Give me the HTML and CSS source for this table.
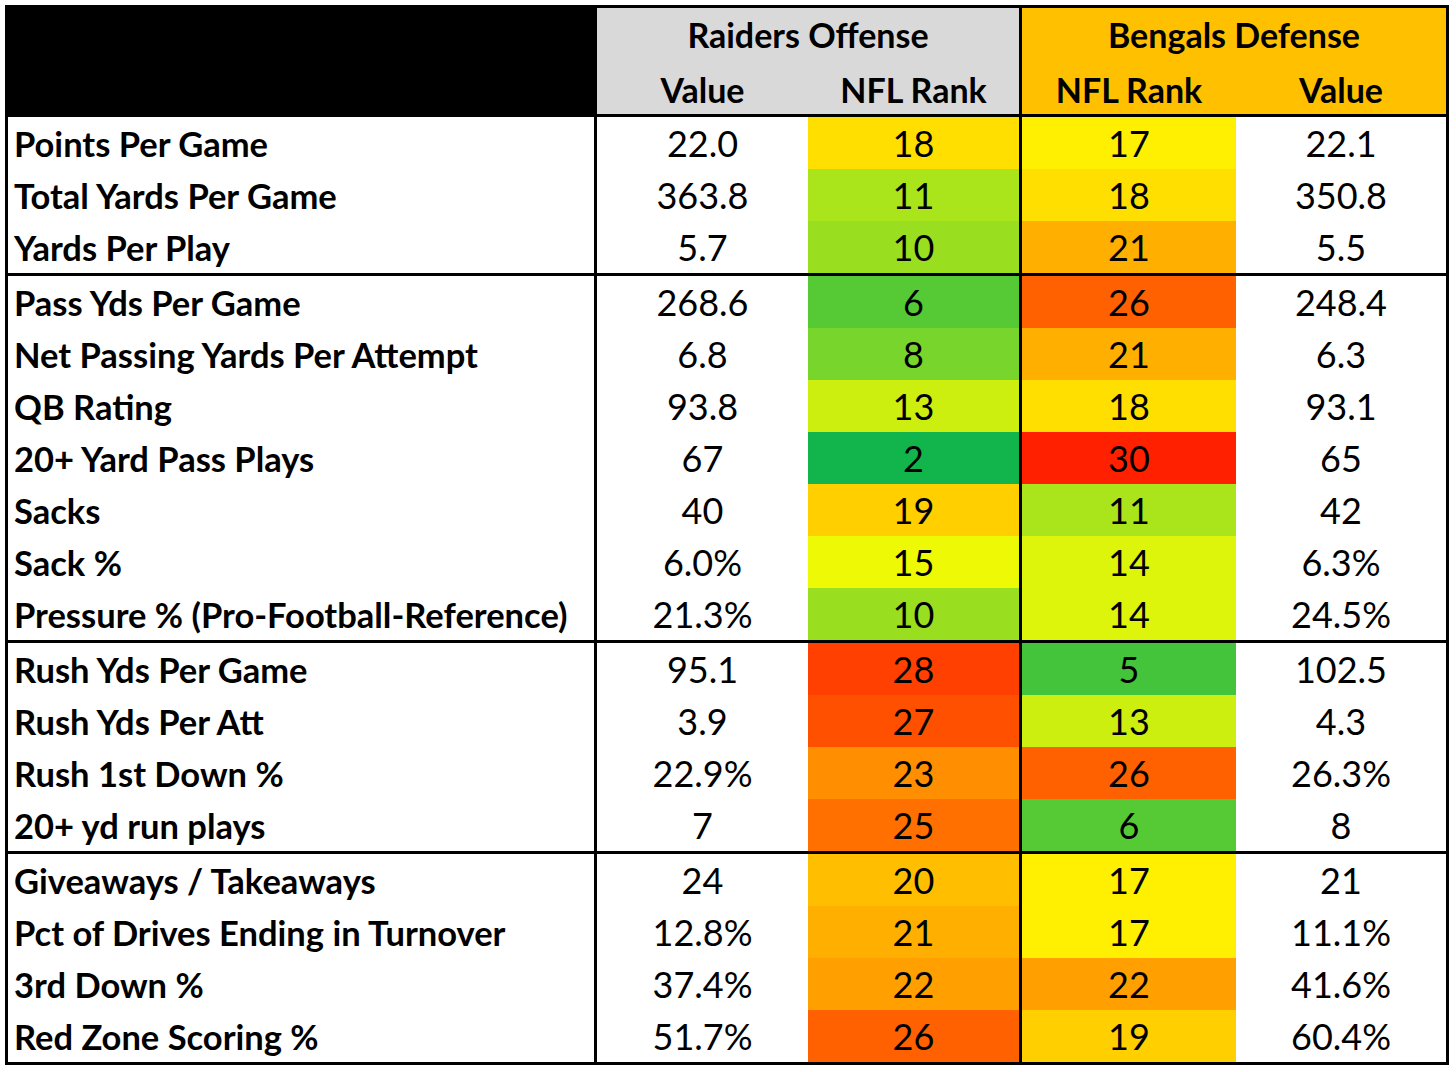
FILE: index.html
```html
<!DOCTYPE html>
<html lang="en">
<head>
<meta charset="utf-8">
<title>Raiders Offense vs Bengals Defense</title>
<link rel="stylesheet" href="styles.css">
</head>
<body>
<div class="page">
  <div class="sheet">
    <div class="head">
      <div class="hd-blank"></div>
      <div class="hd-team raiders">Raiders Offense</div>
      <div class="hd-team bengals">Bengals Defense</div>
      <div class="hd-sub raiders">Value</div>
      <div class="hd-sub raiders sep">NFL Rank</div>
      <div class="hd-sub bengals">NFL Rank</div>
      <div class="hd-sub bengals">Value</div>
    </div>

    <div class="section">
      <div class="row"><div class="lbl">Points Per Game</div><div class="val">22.0</div><div class="rank sep rk18">18</div><div class="rank rk17">17</div><div class="val">22.1</div></div>
      <div class="row"><div class="lbl">Total Yards Per Game</div><div class="val">363.8</div><div class="rank sep rk11">11</div><div class="rank rk18">18</div><div class="val">350.8</div></div>
      <div class="row"><div class="lbl">Yards Per Play</div><div class="val">5.7</div><div class="rank sep rk10">10</div><div class="rank rk21">21</div><div class="val">5.5</div></div>
    </div>

    <div class="section">
      <div class="row"><div class="lbl">Pass Yds Per Game</div><div class="val">268.6</div><div class="rank sep rk6">6</div><div class="rank rk26">26</div><div class="val">248.4</div></div>
      <div class="row"><div class="lbl">Net Passing Yards Per Attempt</div><div class="val">6.8</div><div class="rank sep rk8">8</div><div class="rank rk21">21</div><div class="val">6.3</div></div>
      <div class="row"><div class="lbl">QB Rating</div><div class="val">93.8</div><div class="rank sep rk13">13</div><div class="rank rk18">18</div><div class="val">93.1</div></div>
      <div class="row"><div class="lbl">20+ Yard Pass Plays</div><div class="val">67</div><div class="rank sep rk2">2</div><div class="rank rk30">30</div><div class="val">65</div></div>
      <div class="row"><div class="lbl">Sacks</div><div class="val">40</div><div class="rank sep rk19">19</div><div class="rank rk11">11</div><div class="val">42</div></div>
      <div class="row"><div class="lbl">Sack %</div><div class="val">6.0%</div><div class="rank sep rk15">15</div><div class="rank rk14">14</div><div class="val">6.3%</div></div>
      <div class="row"><div class="lbl">Pressure % (Pro-Football-Reference)</div><div class="val">21.3%</div><div class="rank sep rk10">10</div><div class="rank rk14">14</div><div class="val">24.5%</div></div>
    </div>

    <div class="section">
      <div class="row"><div class="lbl">Rush Yds Per Game</div><div class="val">95.1</div><div class="rank sep rk28">28</div><div class="rank rk5">5</div><div class="val">102.5</div></div>
      <div class="row"><div class="lbl">Rush Yds Per Att</div><div class="val">3.9</div><div class="rank sep rk27">27</div><div class="rank rk13">13</div><div class="val">4.3</div></div>
      <div class="row"><div class="lbl">Rush 1st Down %</div><div class="val">22.9%</div><div class="rank sep rk23">23</div><div class="rank rk26">26</div><div class="val">26.3%</div></div>
      <div class="row"><div class="lbl">20+ yd run plays</div><div class="val">7</div><div class="rank sep rk25">25</div><div class="rank rk6">6</div><div class="val">8</div></div>
    </div>

    <div class="section">
      <div class="row"><div class="lbl">Giveaways / Takeaways</div><div class="val">24</div><div class="rank sep rk20">20</div><div class="rank rk17">17</div><div class="val">21</div></div>
      <div class="row"><div class="lbl">Pct of Drives Ending in Turnover</div><div class="val">12.8%</div><div class="rank sep rk21">21</div><div class="rank rk17">17</div><div class="val">11.1%</div></div>
      <div class="row"><div class="lbl">3rd Down %</div><div class="val">37.4%</div><div class="rank sep rk22">22</div><div class="rank rk22">22</div><div class="val">41.6%</div></div>
      <div class="row"><div class="lbl">Red Zone Scoring %</div><div class="val">51.7%</div><div class="rank sep rk26">26</div><div class="rank rk19">19</div><div class="val">60.4%</div></div>
    </div>
  </div>
</div>
</body>
</html>
```

FILE: styles.css
```css
* { box-sizing: border-box; }

html, body {
  margin: 0;
  padding: 0;
  background: #ffffff;
}

.page {
  padding: 5px;
}

.sheet {
  width: max-content;
  border: 3px solid #000;
  font-family: Lato, "Liberation Sans", sans-serif;
  color: #000;
}

.head,
.row {
  display: grid;
  grid-template-columns: 589px 211px 214px 214px 210px;
}

.head {
  grid-template-rows: 52px 54px;
}

.hd-blank {
  grid-row: 1 / span 2;
  background: #000;
}

.hd-team,
.hd-sub {
  display: flex;
  align-items: center;
  justify-content: center;
  font-weight: 700;
  font-size: 34px;
}

.hd-sub {
  padding-top: 4px;
}

.hd-team {
  grid-column: span 2;
}

.hd-team.raiders {
  border-right: 3px solid #000;
}

.raiders { background: #d9d9d9; }
.bengals { background: #ffc000; }

.section {
  border-top: 3px solid #000;
}

.row {
  height: 52px;
}

.row > div {
  display: flex;
  align-items: center;
  justify-content: center;
  font-size: 36px;
}

.row > .lbl {
  justify-content: flex-start;
  padding-left: 6px;
  font-weight: 700;
  font-size: 34.5px;
  border-right: 3px solid #000;
}

.sep {
  border-right: 3px solid #000;
}

.rk2  { background: #11b54b; }
.rk5  { background: #44c43b; }
.rk6  { background: #55ca35; }
.rk8  { background: #77d52b; }
.rk10 { background: #99df20; }
.rk11 { background: #aae51b; }
.rk13 { background: #ccef10; }
.rk14 { background: #ddf40b; }
.rk15 { background: #eefa05; }
.rk17 { background: #ffef00; }
.rk18 { background: #ffdf00; }
.rk19 { background: #ffcf00; }
.rk20 { background: #ffbf00; }
.rk21 { background: #ffaf00; }
.rk22 { background: #ff9f00; }
.rk23 { background: #ff8f00; }
.rk25 { background: #ff7000; }
.rk26 { background: #ff6000; }
.rk27 { background: #ff5000; }
.rk28 { background: #ff4000; }
.rk30 { background: #ff2000; }
```
